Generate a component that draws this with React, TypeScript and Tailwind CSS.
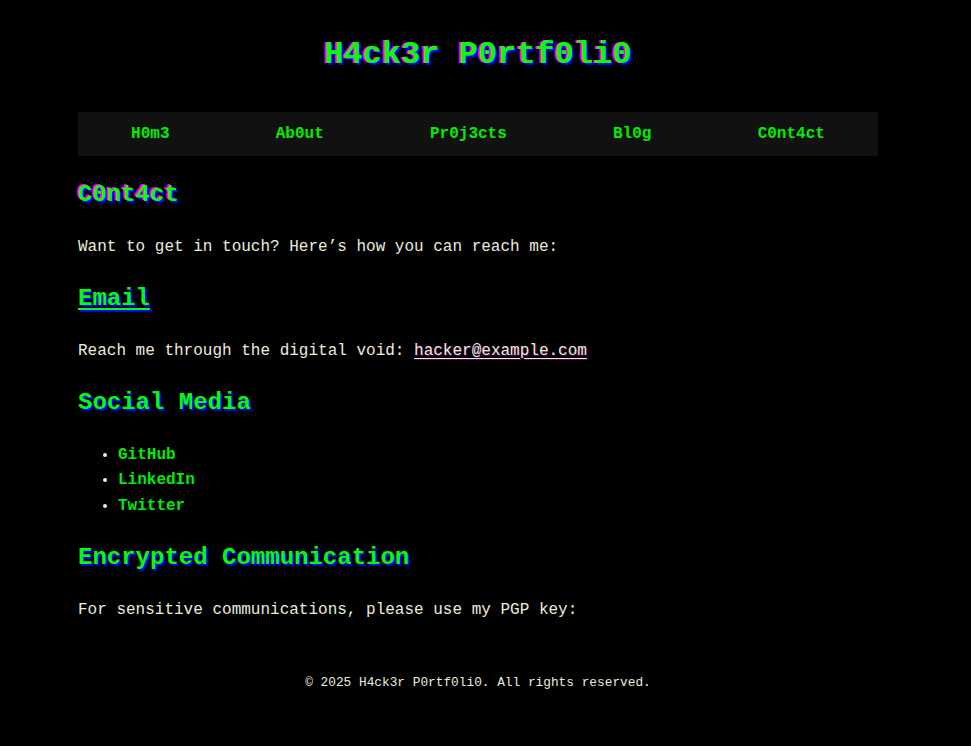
export default function App() {
  const links = ["H0m3", "Ab0ut", "Pr0j3cts", "Bl0g", "C0nt4ct"];
  const socials = ["GitHub", "LinkedIn", "Twitter"];

  return (
    <div className="min-h-screen bg-black pr-[15px] font-['Liberation_Mono','Courier_New',monospace] leading-[1.6] text-[#ececdf]">
      <div className="mx-auto max-w-[800px]">
        {/* Header */}
        <header className="pt-[29px] text-center">
          <h1 className="text-[32px] font-bold leading-[1.6] text-[#00ff00] [text-shadow:-2px_0_#ff00ff,2px_2px_#0000ff]">
            H4ck3r P0rtf0li0
          </h1>
          <nav className="mt-[32px] flex justify-around bg-[#111111] py-[9px]">
            {links.map(link => (
              <a key={link} href="#" className="text-base font-bold leading-[26px] text-[#00ee00]">
                {link}
              </a>
            ))}
          </nav>
        </header>

        {/* Contact */}
        <main>
          <h2 className="mt-[20px] mb-5 text-[24px] font-bold leading-[1.6] text-[#00ff00] [text-shadow:-2px_-1px_#ff00ff,2px_2px_#0000ff]">
            C0nt4ct
          </h2>
          <p className="my-4">Want to get in touch? Here’s how you can reach me:</p>

          <h3 className="my-5 text-[24px] font-bold leading-[1.6] text-[#00ff00] underline decoration-[#00ff00] underline-offset-[3px] [text-shadow:2px_2px_#0000ff]">
            Email
          </h3>
          <p className="my-4">
            Reach me through the digital void:{" "}
            <a href="#" className="underline decoration-[#ececdf] underline-offset-[3px] [text-shadow:1px_1px_rgba(255,0,255,0.35)]">
              hacker@example.com
            </a>
          </p>

          <h3 className="my-5 text-[24px] font-bold leading-[1.6] text-[#00ff00] [text-shadow:2px_2px_#0000ff]">
            Social Media
          </h3>
          <ul className="my-4 list-disc pl-10">
            {socials.map(s => (
              <li key={s}>
                <a href="#" className="font-bold text-[#00ee00]">{s}</a>
              </li>
            ))}
          </ul>

          <h3 className="my-5 text-[24px] font-bold leading-[1.6] text-[#00ff00] [text-shadow:2px_2px_#0000ff]">
            Encrypted Communication
          </h3>
          <p className="my-4">For sensitive communications, please use my PGP key:</p>
        </main>

        <footer className="mt-[30px] pt-5 pb-5 text-center text-[12.8px] leading-[1.6]">
          © 2025 H4ck3r P0rtf0li0. All rights reserved.
        </footer>
      </div>
    </div>
  );
}
